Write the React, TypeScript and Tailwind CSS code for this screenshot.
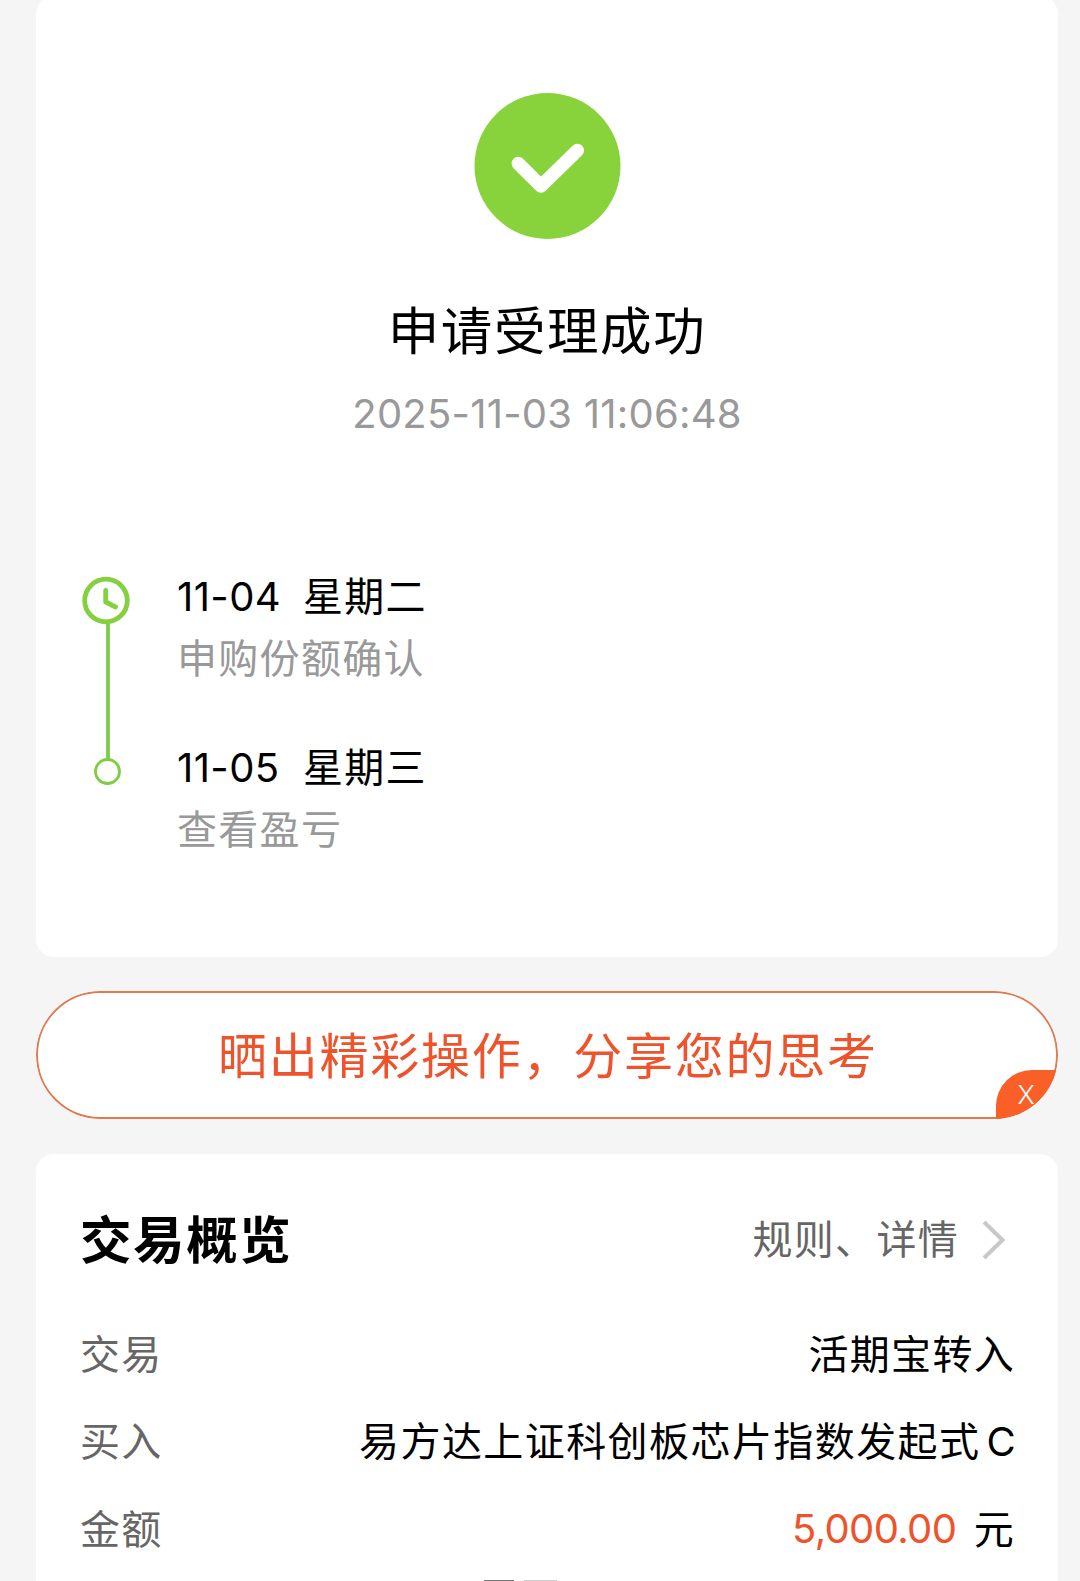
import React from "react";

function Glyphs({ children, className = "" }: { children: React.ReactNode; className?: string }) {
  return <span className={`block whitespace-nowrap ${className}`}>{children}</span>;
}

function SuccessMark() {
  return (
    <svg width="147" height="146" viewBox="0 0 147 146" fill="none">
      <circle cx="73.5" cy="73" r="73" fill="#88d33c" />
      <path d="M44.3 70.5 L67 93 L103.3 57.5" stroke="#fff" strokeWidth="13.5" strokeLinecap="round" strokeLinejoin="round" />
    </svg>
  );
}

function TimelineRail() {
  return (
    <svg width="50" height="212" viewBox="0 0 50 212" fill="none" className="shrink-0">
      <path d="M27 48 V184" stroke="#7dcb4c" strokeWidth="3.8" />
      <circle cx="25" cy="24.5" r="21.3" stroke="#84d03f" strokeWidth="4.8" />
      <path d="M24.7 14.5 V26 L34.5 31" stroke="#84d03f" strokeWidth="4.8" strokeLinecap="round" strokeLinejoin="round" />
      <circle cx="26.5" cy="195.5" r="12" stroke="#80cd45" strokeWidth="2.8" fill="#fff" />
    </svg>
  );
}

function Step({ date, day, note }: { date: string; day: string; note: string }) {
  return (
    <div className="h-[171px]">
      <div className="flex h-[60px] items-center gap-[22px] text-black">
        <Glyphs className="w-[104px] tracking-[0.4px]">{date}</Glyphs>
        <Glyphs>{day}</Glyphs>
      </div>
      <Glyphs className="mt-0.5 h-[60px] leading-[60px] text-[#999]">{note}</Glyphs>
    </div>
  );
}

function Row({ label, children }: { label: string; children: React.ReactNode }) {
  return (
    <div className="flex h-[87.5px] items-center justify-between">
      <Glyphs className="-ml-px text-[#666]">{label}</Glyphs>
      <div className="flex items-center text-black">{children}</div>
    </div>
  );
}

export default function App() {
  return (
    <main className="flex h-[1581px] w-[1080px] flex-col overflow-hidden bg-[#f5f5f5] pr-[22px] pl-9 font-['Inter','Noto_Sans_CJK_SC',sans-serif] text-[40px] leading-[60px] tracking-[1.3px]">
      <section className="-mt-1 h-[961px] shrink-0 rounded-[18px] bg-white">
        <div className="flex flex-col items-center pt-[97px]">
          <SuccessMark />
          <Glyphs className="mt-[52px] h-20 text-[51.5px] leading-20 tracking-[1.6px] text-black">申请受理成功</Glyphs>
          <Glyphs className="mt-[13px] tracking-[0.23px] text-[#999]">2025-11-03 11:06:48</Glyphs>
        </div>
        <div className="mt-[123px] flex pl-[45px]">
          <div className="pt-[9px]"><TimelineRail /></div>
          <div className="pl-[46px]">
            <Step date="11-04" day="星期二" note="申购份额确认" />
            <Step date="11-05" day="星期三" note="查看盈亏" />
          </div>
        </div>
      </section>

      <section className="relative mt-[34px] h-[128px] shrink-0 overflow-hidden rounded-full">
        <div className="flex h-full items-center justify-center rounded-full border-2 border-[#e07a50] bg-white">
          <Glyphs className="mt-1 ml-0.5 text-[49px] tracking-[1.75px] text-[#ee532b]">晒出精彩操作，分享您的思考</Glyphs>
        </div>
        <button className="absolute right-0 bottom-0 flex h-[49px] w-[62px] items-center justify-center rounded-tl-[36px] bg-[#fa5f28] pr-0.5 text-[26px] font-light tracking-normal text-white">
          X
        </button>
      </section>

      <section className="mt-[35px] h-[427px] shrink-0 overflow-hidden rounded-t-[18px] bg-white px-[45px]">
        <header className="mt-[42px] flex h-[88px] items-center justify-between">
          <Glyphs className="-ml-px text-[51.5px] font-bold tracking-[1.6px] text-black">交易概览</Glyphs>
          <div className="flex items-center text-[#666]">
            <Glyphs>规则、详情</Glyphs>
            <svg width="24" height="40" viewBox="0 0 24 40" fill="none" className="mr-[7px] ml-[23px]">
              <path d="M2 2 L20.5 20 L2 38" stroke="#c8c8c8" strokeWidth="4" />
            </svg>
          </div>
        </header>
        <div className="mt-[27px]">
          <Row label="交易"><Glyphs className="-mr-[2px]">活期宝转入</Glyphs></Row>
          <Row label="买入">
            <Glyphs className="tracking-[1.43px]">易方达上证科创板芯片指数发起式</Glyphs>
            <Glyphs className="ml-[6px] -mr-[4px]">C</Glyphs>
          </Row>
          <Row label="金额">
            <Glyphs className="-mt-0.5 tracking-[-0.65px] text-[#ee532b]">5,000.00</Glyphs>
            <Glyphs className="-mr-0.5 ml-[17.4px]">元</Glyphs>
          </Row>
        </div>
        <div className="mt-[6px] flex gap-[10px] pl-[403px]">
          <span className="h-1 w-[30px] bg-[#777]" />
          <span className="h-1 w-[33px] bg-[#ccc]" />
        </div>
      </section>
    </main>
  );
}
